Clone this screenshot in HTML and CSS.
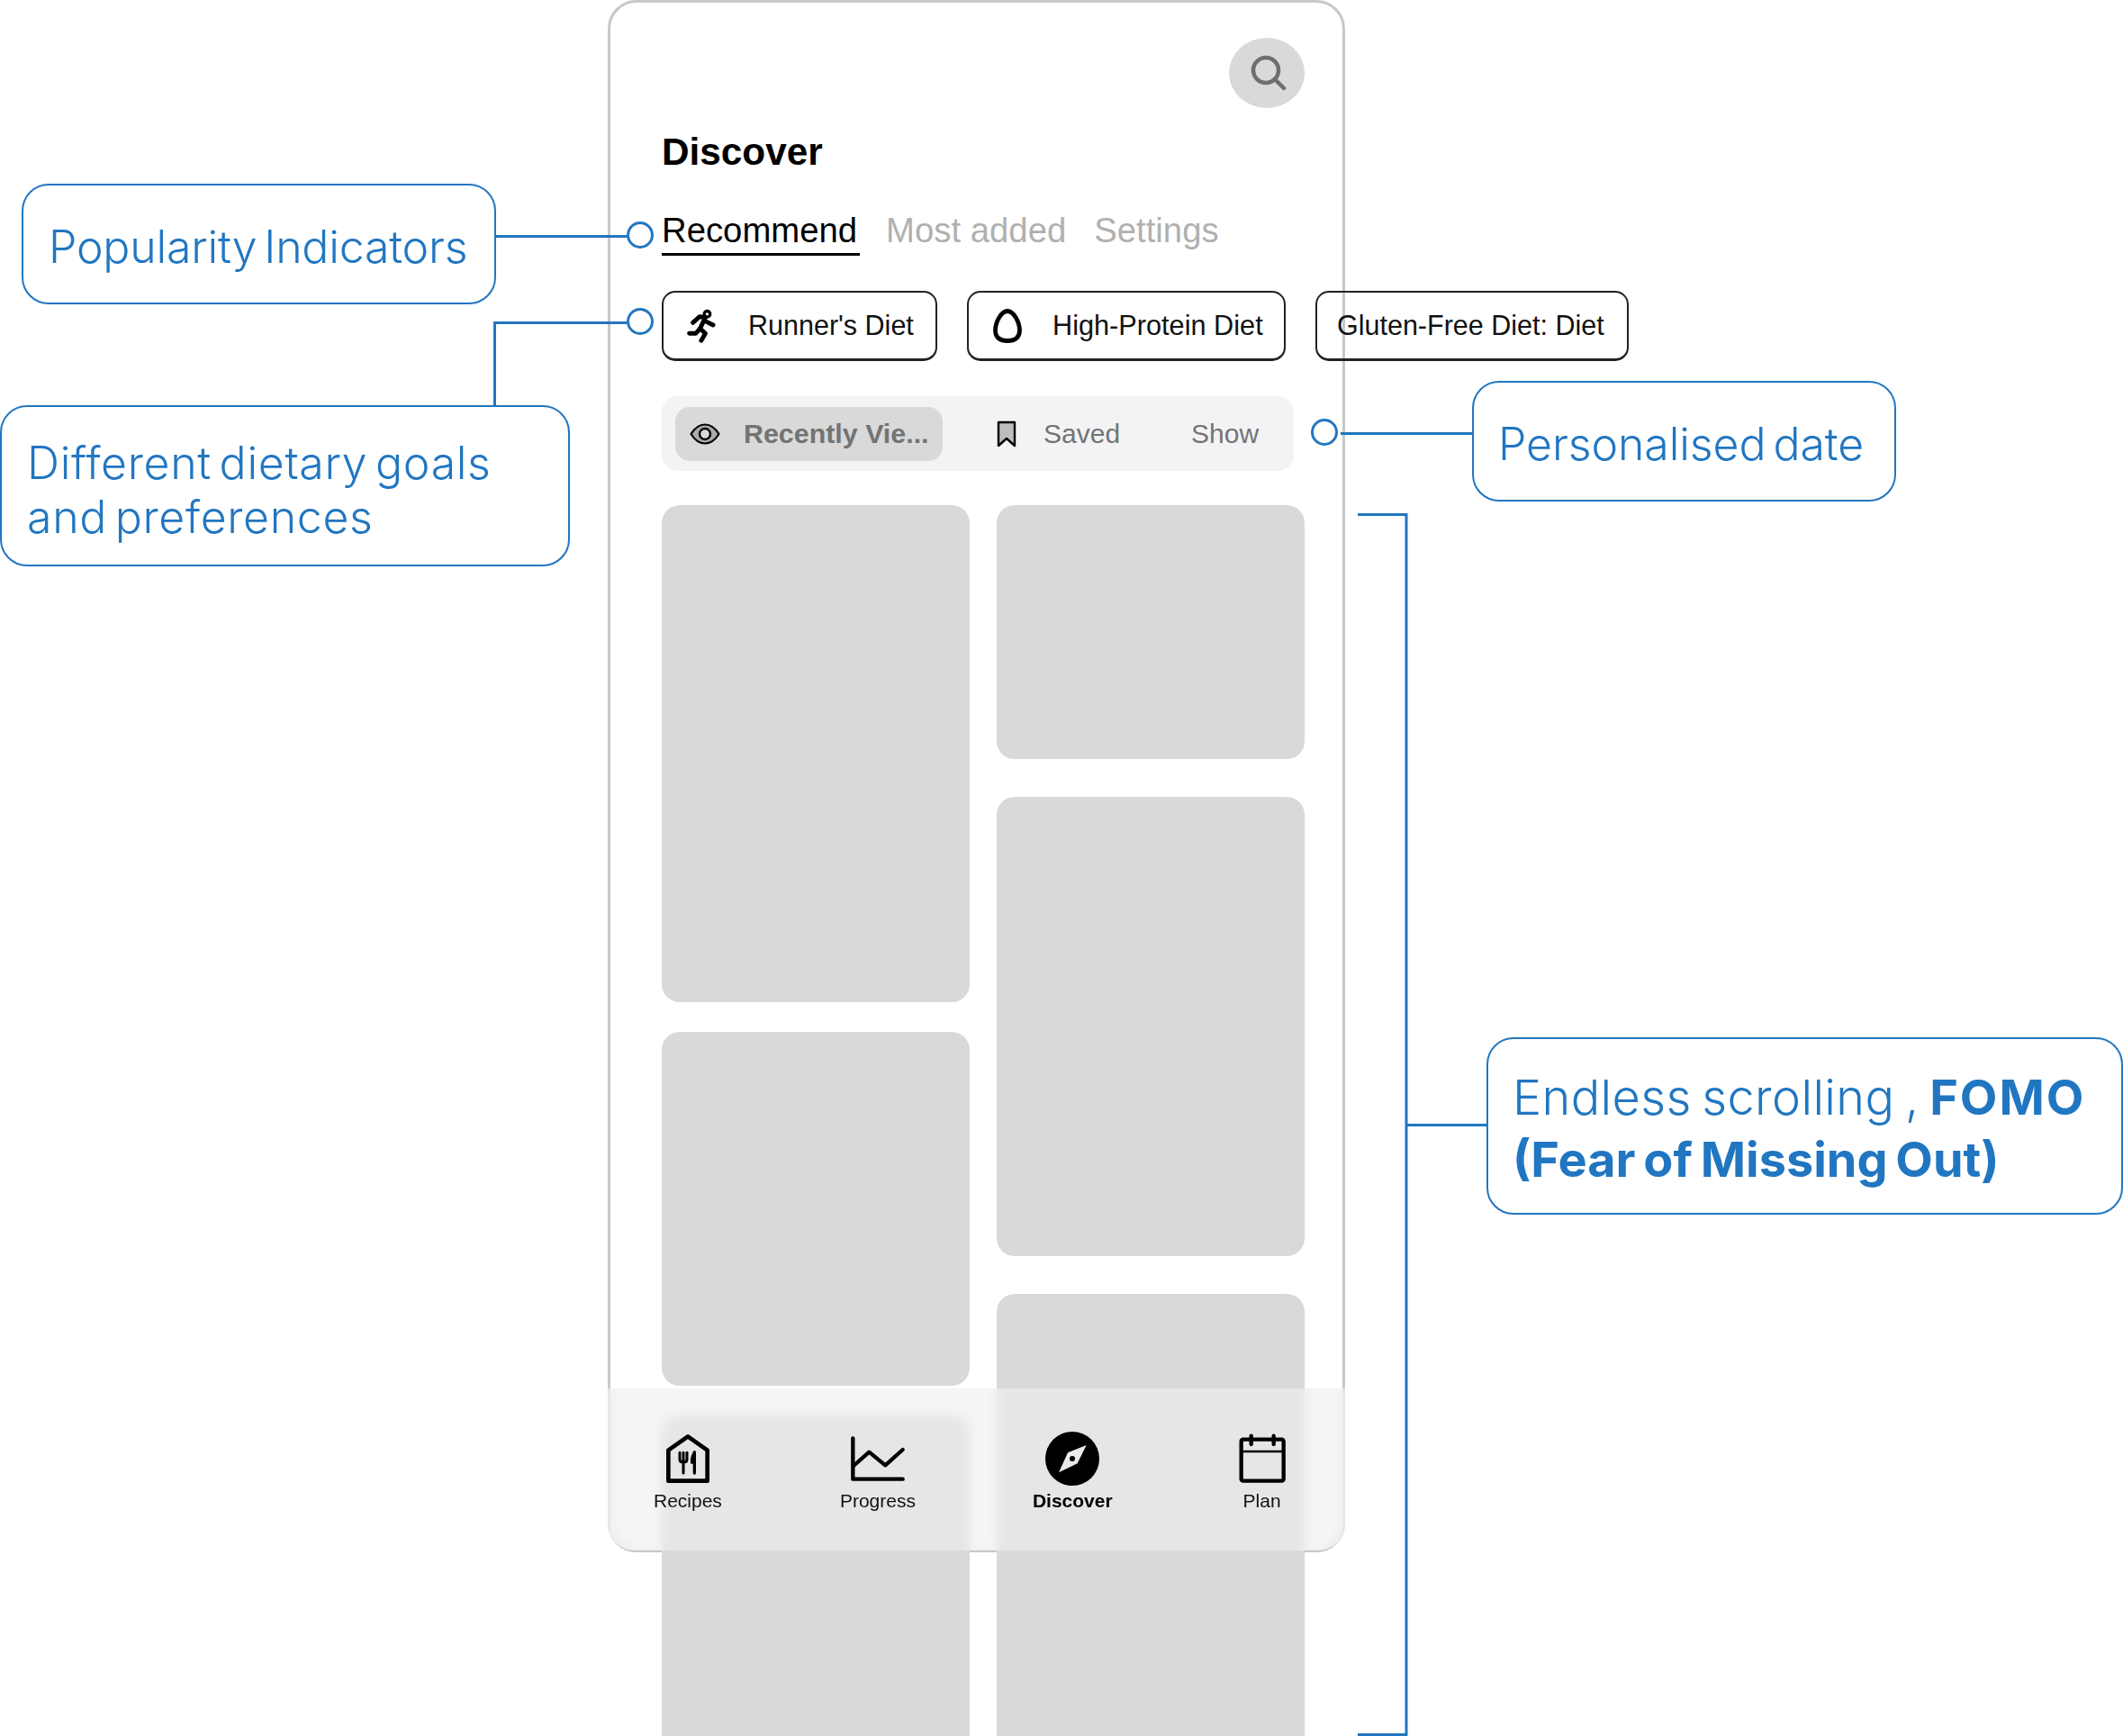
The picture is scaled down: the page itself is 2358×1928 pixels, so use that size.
FILE: index.html
```html
<!DOCTYPE html>
<html lang="en">
<head>
<meta charset="utf-8">
<title>Discover annotations</title>
<link rel="stylesheet" href="styles.css">
</head>
<body>
<div class="canvas">
  <section class="phone">
    <div class="top-row">
      <button class="search-btn" aria-label="Search">
        <svg class="search-icon" viewBox="0 0 44 44"><circle cx="21" cy="19" r="14" fill="none" stroke="#6e6e6e" stroke-width="4.500"/><path d="M32 30 L41 39" stroke="#6e6e6e" stroke-width="4.500" stroke-linecap="round"/></svg>
      </button>
    </div>
    <h1 class="title">Discover</h1>
    <nav class="tabs">
      <span class="tab tab-active">Recommend</span>
      <span class="tab">Most added</span>
      <span class="tab">Settings</span>
    </nav>
    <div class="chips">
      <div class="chip chip-a">
        <svg class="icon-run" viewBox="190 35 100 120" fill="none" stroke="#000" stroke-width="15" stroke-linecap="round" stroke-linejoin="round"><circle cx="258" cy="55" r="10" stroke-width="10"/><path d="M210 84 L232 64 L252 66 L234 104 L252 120 L238 144"/><path d="M250 78 L278 92"/><path d="M232 106 L220 120 L198 120"/></svg>
        <span>Runner's Diet</span>
      </div>
      <div class="chip chip-b">
        <svg class="icon-egg" viewBox="0 0 32 38"><path d="M16 2.500 C23 2.500 29.500 15 29.500 24 C29.500 32 24 35.500 16 35.500 C8 35.500 2.500 32 2.500 24 C2.500 15 9 2.500 16 2.500 Z" fill="none" stroke="#000" stroke-width="4.800"/></svg>
        <span>High-Protein Diet</span>
      </div>
      <div class="chip chip-c"><span>Gluten-Free Diet: Diet</span></div>
    </div>
    <div class="segment">
      <div class="seg-item seg-active">
        <svg class="icon-eye" viewBox="0 0 34 24"><path d="M1.500 12 C7 3 12 1.500 17 1.500 C22 1.500 27 3 32.500 12 C27 21 22 22.500 17 22.500 C12 22.500 7 21 1.500 12 Z" fill="#aaa" stroke="#000" stroke-width="2.200"/><circle cx="17" cy="12" r="6" fill="#d9d9d9" stroke="#000" stroke-width="2.400"/></svg>
        <span>Recently Vie...</span>
      </div>
      <div class="seg-item seg-saved">
        <svg class="icon-mark" viewBox="0 0 22 30"><path d="M2 2 H20 V28 L11 20 L2 28 Z" fill="#bdbdbd" stroke="#000" stroke-width="2.400" stroke-linejoin="round"/></svg>
        <span>Saved</span>
      </div>
      <div class="seg-item seg-show"><span>Show</span></div>
    </div>
    <div class="feed">
      <div class="feed-col feed-col-a">
        <div class="card card-552"></div>
        <div class="card card-393"></div>
        <div class="card card-rest"></div>
      </div>
      <div class="feed-col feed-col-b">
        <div class="card card-282"></div>
        <div class="card card-510"></div>
        <div class="card card-rest"></div>
      </div>
    </div>
    <nav class="bottom-nav">
      <div class="nav-item nav-recipes">
        <svg class="nav-icon" width="54" height="60" viewBox="234 270 162 180" fill="none" stroke="#000" stroke-width="14" stroke-linejoin="round" stroke-linecap="round"><path d="M315 286 L380 332 V434 H250 V332 Z"/><path d="M288 340 V362 Q288 372 300 372 Q312 372 312 362 V340 M300 340 V408" stroke-width="9"/><path d="M337 338 V408" stroke-width="10"/><path d="M337 338 Q325 350 327 374 H337 Z" fill="#000" stroke-width="6"/></svg>
        <span>Recipes</span>
      </div>
      <div class="nav-item nav-progress">
        <svg class="nav-icon" width="66" height="60" viewBox="846 270 198 180" fill="none" stroke="#000" stroke-width="13" stroke-linejoin="round" stroke-linecap="round"><path d="M862 292 V428 H1028"/><path d="M864 384 L916 338 L970 382 L1028 330"/></svg>
        <span>Progress</span>
      </div>
      <div class="nav-item nav-discover nav-current">
        <svg class="nav-icon" width="60" height="60" viewBox="243 270 180 180"><circle cx="333" cy="360" r="90" fill="#000"/><path d="M380 315 L350 376 L288 406 L318 340 Z" fill="#eaeaea"/><circle cx="333" cy="360" r="9" fill="#000"/></svg>
        <span>Discover</span>
      </div>
      <div class="nav-item nav-plan">
        <svg class="nav-icon" width="54" height="60" viewBox="886 270 162 180" fill="none" stroke="#000" stroke-width="13" stroke-linejoin="round" stroke-linecap="round"><rect x="897" y="296" width="141" height="138" rx="6"/><path d="M897 336 H1038" stroke-width="8"/><path d="M930 284 V312 M1005 284 V312"/></svg>
        <span>Plan</span>
      </div>
    </nav>
  </section>

  <svg class="connectors" width="2358" height="1928" viewBox="0 0 2358 1928" fill="none" stroke="#2176c1">
    <path d="M551 262.500 H696" stroke-width="3"/>
    <circle cx="711" cy="261" r="13.500" stroke-width="3"/>
    <path d="M549.500 450 V358.500 H696" stroke-width="3"/>
    <circle cx="711" cy="357" r="13.500" stroke-width="3"/>
    <circle cx="1471" cy="480" r="13.500" stroke-width="3"/>
    <path d="M1489 481.500 H1636" stroke-width="3"/>
    <path d="M1508 571.500 H1562 V1926.500 H1508" stroke-width="3"/>
    <path d="M1562 1249.500 H1652" stroke-width="3"/>
  </svg>

  <div class="note note-popularity"><p class="note-text">Popularity Indicators</p></div>
  <div class="note note-goals"><p class="note-text">Different dietary goals<br>and preferences</p></div>
  <div class="note note-date"><p class="note-text">Personalised date</p></div>
  <div class="note note-fomo"><p class="note-text">Endless scrolling , <b class="fomo-word">FOMO</b><br><b>(Fear of Missing Out)</b></p></div>
</div>
</body>
</html>
```
FILE: styles.css
```css
* { box-sizing: border-box; }
html, body { margin: 0; padding: 0; background: #fff; }
.canvas {
  position: relative;
  width: 2358px;
  height: 1928px;
  overflow: hidden;
  background: #fff;
  font-family: "Liberation Sans", Arial, sans-serif;
  color: #000;
}

/* phone */
.phone {
  position: absolute;
  left: 675px;
  top: 0;
  width: 819px;
  height: 1724px;
  border: 3px solid #c8c8c8;
  border-radius: 32px;
  padding: 39px 0 0 57px;
}
.top-row { display: flex; justify-content: flex-end; padding-right: 42px; }
.search-btn {
  width: 84px;
  height: 78px;
  padding: 0;
  border: 0;
  border-radius: 50%;
  background: #d9d9d9;
  display: flex;
  align-items: center;
  justify-content: center;
}
.search-icon { width: 44px; height: 44px; }
.title {
  margin: 25px 0 0;
  font-size: 42.300px;
  line-height: 48px;
  font-weight: 700;
}
.tabs { display: flex; gap: 31px; margin-top: 41px; align-items: flex-start; }
.tab { font-size: 38.300px; line-height: 44px; color: #b0b0b0; padding-bottom: 6px; }
.tab-active { color: #000; padding-bottom: 3px; padding-right: 3px; border-bottom: 3px solid #000; margin-right: -2px; }

.chips { display: flex; gap: 33px; margin-top: 39px; width: 1074px; }
.chip {
  height: 78px;
  flex: none;
  display: flex;
  align-items: center;
  border: 2px solid #222;
  border-bottom-width: 3px;
  border-radius: 15px;
  font-size: 30.500px;
  color: #111;
  white-space: nowrap;
}
.chip-a { width: 306px; padding-left: 26px; gap: 35px; }
.chip-b { width: 354px; padding-left: 27px; gap: 34px; font-size: 30.700px; }
.chip-c { width: 348px; padding-left: 22px; }
.icon-run { width: 33px; height: 40px; flex: none; }
.icon-egg { width: 32px; height: 38px; flex: none; }

.segment {
  display: flex;
  align-items: center;
  width: 702px;
  height: 83px;
  margin-top: 39px;
  padding-left: 15px;
  border-radius: 18px;
  background: #f3f3f5;
  font-size: 30px;
  color: #737373;
}
.seg-item { display: flex; align-items: center; white-space: nowrap; }
.seg-active {
  width: 297px;
  height: 60px;
  padding-left: 16px;
  gap: 26px;
  border-radius: 16px;
  background: #d9d9d9;
  font-weight: 700;
  font-size: 30.400px;
}
.seg-saved { margin-left: 60px; gap: 30px; }
.seg-show { margin-left: 79px; }
.icon-eye { width: 34px; height: 24px; flex: none; }
.icon-mark { width: 22px; height: 30px; flex: none; }

.feed { display: flex; gap: 30px; margin-top: 38px; width: 714px; }
.feed-col { width: 342px; flex: none; display: flex; flex-direction: column; }
.feed-col-a { gap: 33px; }
.feed-col-b { gap: 42px; }
.card { background: #d9d9d9; border-radius: 20px; }
.card-552 { height: 552px; }
.card-393 { height: 393px; }
.card-282 { height: 282px; }
.card-510 { height: 510px; }
.card-rest { height: 600px; }

/* bottom nav */
.bottom-nav {
  position: absolute;
  left: -3px;
  right: -3px;
  top: 1539px;
  height: 180px;
  display: flex;
  align-items: flex-start;
  padding: 48px 0 0 51px;
  border-radius: 0 0 30px 30px;
  background: rgba(238, 238, 239, 0.6);
  backdrop-filter: blur(6px);
}
.nav-item {
  display: flex;
  flex-direction: column;
  align-items: center;
  font-size: 21px;
  line-height: 26px;
  color: #111;
  gap: 4px;
}
.nav-icon { display: block; flex: none; }
.nav-progress { margin-left: 131px; }
.nav-discover { margin-left: 130px; }
.nav-plan { margin-left: 139px; }
.nav-current { font-weight: 700; color: #000; }

/* annotation layer */
.connectors { position: absolute; left: 0; top: 0; pointer-events: none; }
.note {
  position: absolute;
  display: flex;
  align-items: center;
  border: 2px solid #2176c1;
  border-radius: 30px;
  background: #fff;
  color: #2176c1;
  font-family: Inter, "Liberation Sans", sans-serif;
  font-weight: 350;
  font-size: 50px;
  line-height: 60px;
  white-space: nowrap;
  padding-top: 5px;
}
.note-text { margin: 0; }
.note-popularity { left: 24px; top: 204px; width: 527px; height: 134px; padding-left: 28px; letter-spacing: -0.200px; word-spacing: -6px; }
.note-goals { left: 0; top: 450px; width: 633px; height: 179px; padding-left: 28px; padding-top: 8px; letter-spacing: 0.670px; word-spacing: -6px; }
.note-date { left: 1635px; top: 423px; width: 471px; height: 134px; padding-left: 27px; letter-spacing: -0.100px; word-spacing: -6px; }
.note-fomo { left: 1651px; top: 1152px; width: 707px; height: 197px; padding-left: 27px; font-size: 54px; line-height: 69px; font-weight: 300; letter-spacing: 0.380px; word-spacing: -4px; }
.note-fomo b { font-weight: 700; letter-spacing: 0; }
.note-fomo .fomo-word { letter-spacing: 2px; }
```
